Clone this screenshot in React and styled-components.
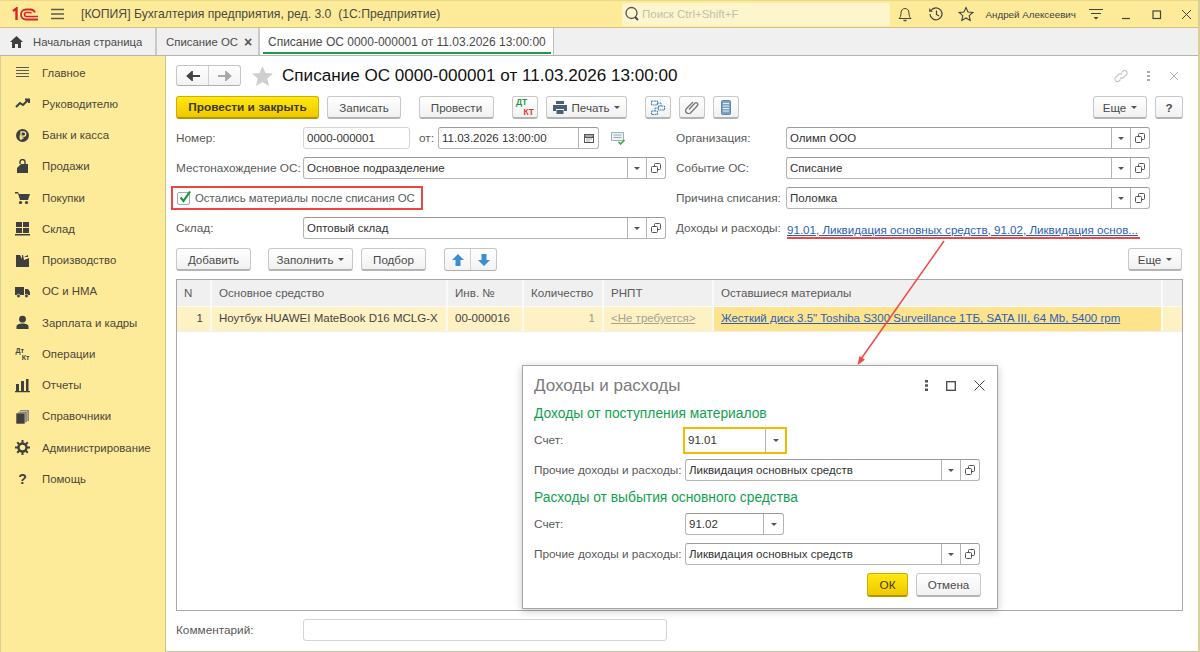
import React from 'react';
import styled, { createGlobalStyle } from 'styled-components';

const GlobalStyle = createGlobalStyle`
  html, body { margin: 0; padding: 0; }
  body {
    font-family: 'Liberation Sans', Arial, sans-serif;
    font-size: 12px;
    color: #4b4b4b;
    background: #fff;
  }
`;

const Ink = '#3f3f3f';

const Glyph = ({ w = 16, h = 16, vb, children, className }) => (
  <svg className={className} width={w} height={h} viewBox={vb || `0 0 ${w} ${h}`} fill="none">
    {children}
  </svg>
);

const CopyIcon = () => (
  <Glyph w={10} h={10}>
    <rect x="3.500" y="0.500" width="6" height="6" rx="1" stroke="#555" />
    <rect x="0.500" y="3.500" width="6" height="6" rx="1" stroke="#555" fill="#fff" />
  </Glyph>
);

const sideIcons = {
  main: (
    <path d="M1 2.500h13M1 5.500h13M1 8.500h13M1 11.500h13" stroke="#5a5a5a" strokeWidth="1.200" />
  ),
  chief: (
    <path d="M1 11l4-4 3 2 5-5M10 3.500h4v3.500" stroke={Ink} strokeWidth="2" />
  ),
  bank: (
    <>
      <circle cx="7.500" cy="7.500" r="6.500" fill={Ink} />
      <path d="M6 12V3.800h2.500a2 2 0 010 4.400H4.500M4.500 10h4" stroke="#fdeb99" strokeWidth="1.300" />
    </>
  ),
  sales: (
    <>
      <path d="M2 5h11v9H2z" fill={Ink} />
      <path d="M5 7V3a2.500 2.500 0 015 0v4" stroke={Ink} strokeWidth="1.400" />
      <path d="M2 9l4-4h-4z" fill="#fdeb99" />
    </>
  ),
  buy: (
    <>
      <path d="M0 2h3l1 2h11l-2 6H5L3 3.500H0z" fill={Ink} />
      <circle cx="5.500" cy="12.500" r="1.600" fill={Ink} />
      <circle cx="11.500" cy="12.500" r="1.600" fill={Ink} />
    </>
  ),
  store: (
    <path d="M1 1h6v5H1zM8 1h6v5H8zM1 7h6v5H1zM8 7h6v5H8zM0 13h15v1.400H0z" fill={Ink} />
  ),
  prod: (
    <path d="M1 14V2h4l2 4V2l1 0 1 5 5-2v9z M9 4l4-2v2z" fill={Ink} />
  ),
  assets: (
    <>
      <path d="M0 3h9v8H0zM10 5h3l2 3v3h-5z" fill={Ink} />
      <circle cx="3.500" cy="12" r="1.800" fill={Ink} stroke="#fdeb99" strokeWidth=".7" />
      <circle cx="11.500" cy="12" r="1.800" fill={Ink} stroke="#fdeb99" strokeWidth=".7" />
    </>
  ),
  staff: (
    <>
      <circle cx="7.500" cy="4.200" r="3.400" fill={Ink} />
      <path d="M1.500 14v-2.500c0-2 2.500-3 6-3s6 1 6 3V14z" fill={Ink} />
    </>
  ),
  reports: (
    <path d="M1 6h3v7H1zM6 3h3v10H6zM11 1h2.500v12H11zM0 13h15v1.200H0z" fill={Ink} />
  ),
  refs: (
    <>
      <path d="M5 1h9v11H5z" fill="#8a8a8a" />
      <path d="M3 2.500h9v11H3z" fill="#6a6a6a" stroke="#fdeb99" strokeWidth=".6" />
      <path d="M1 4h9v11H1z" fill={Ink} stroke="#fdeb99" strokeWidth=".6" />
    </>
  ),
  admin: (
    <>
      <circle cx="7.500" cy="7.500" r="4" stroke={Ink} strokeWidth="2.400" />
      <path
        d="M7.500 0v3M7.500 12v3M0 7.500h3M12 7.500h3M2.200 2.200l2 2M10.800 10.800l2 2M2.200 12.800l2-2M10.800 4.200l2-2"
        stroke={Ink}
        strokeWidth="2"
      />
    </>
  ),
};

const menu = [
  ['Главное', 'main'],
  ['Руководителю', 'chief'],
  ['Банк и касса', 'bank'],
  ['Продажи', 'sales'],
  ['Покупки', 'buy'],
  ['Склад', 'store'],
  ['Производство', 'prod'],
  ['ОС и НМА', 'assets'],
  ['Зарплата и кадры', 'staff'],
  ['Операции', 'ops'],
  ['Отчеты', 'reports'],
  ['Справочники', 'refs'],
  ['Администрирование', 'admin'],
  ['Помощь', 'help'],
];

const Page = styled.div`
  width: 1200px;
  height: 652px;
  position: relative;
  overflow: hidden;
  display: flex;
  flex-direction: column;
  box-sizing: border-box;
  border-right: 2px solid #d9cf9b;
`;

const TopBar = styled.header`
  height: 28px;
  flex: none;
  box-sizing: border-box;
  display: flex;
  align-items: center;
  background: #fdeb99;
  border-bottom: 1px solid #cfc384;
  border-top: 1px solid #e8d98a;
  padding-left: 12px;
`;

const Logo = styled.div`
  width: 27px;
  flex: none;
  display: flex;
`;

const Burger = styled.div`
  margin-left: 12px;
  flex: none;
  display: flex;
`;

const AppTitle = styled.div`
  margin-left: 17px;
  width: 541px;
  flex: none;
  font-size: 12.200px;
  white-space: pre;
  color: #4a4a42;
`;

const Search = styled.div`
  width: 268px;
  height: 23px;
  flex: none;
  box-sizing: border-box;
  border-radius: 2px;
  background: #fdf5cc;
  display: flex;
  align-items: center;
  gap: 2px;
  padding-left: 2px;
  color: #c3c0ae;
  font-size: 11.500px;
`;

const TopIcons = styled.div`
  display: flex;
  align-items: center;
  flex: 1;
  min-width: 0;
`;

const TopIcon = styled.span`
  display: flex;
  justify-content: center;
  flex: none;
  width: ${(p) => p.$w || 30.500}px;
`;

const UserName = styled.span`
  font-size: 9.800px;
  color: #3f3f3f;
  margin-left: 4px;
  width: 103px;
  flex: none;
  white-space: nowrap;
`;

const TabBar = styled.nav`
  height: 28px;
  flex: none;
  box-sizing: border-box;
  display: flex;
  background: #f0f0f0;
  border-bottom: 1px solid #b5b5b5;
`;

const Tab = styled.div`
  height: 27px;
  box-sizing: border-box;
  display: flex;
  align-items: center;
  flex: none;
  width: ${(p) => p.$w}px;
  padding-left: ${(p) => p.$pad}px;
  gap: ${(p) => p.$gap || 0}px;
  font-size: ${(p) => p.$size}px;
  white-space: nowrap;
  color: #4b4b4b;
  border-right: 2px solid #c9c9c9;
  position: relative;
  background: ${(p) => (p.$active ? '#fff' : '#f0f0f0')};
  ${(p) => p.$active && 'border-right: 1px solid #bdbdbd;'}
  ${(p) =>
    p.$active &&
    `&::after {
      content: '';
      position: absolute;
      left: 3px;
      right: 2px;
      bottom: 1px;
      height: 2px;
      background: #1f9a4d;
    }`}
`;

const TabClose = styled.span`
  font-size: 14px;
  font-weight: 700;
  color: #555;
  line-height: 1;
`;

const Body = styled.div`
  flex: 1;
  display: flex;
  min-height: 0;
`;

const Sidebar = styled.aside`
  width: 166px;
  flex: none;
  box-sizing: border-box;
  background: #fdeb99;
  border-left: 1px solid #d9cf9b;
  border-right: 1px solid #c9c08a;
  padding-top: 1px;
`;

const MenuItem = styled.div`
  height: 31.250px;
  display: flex;
  align-items: center;
  padding-left: 14px;
  gap: 12px;
  font-size: 11.400px;
  color: #4c463c;
  white-space: nowrap;
`;

const MenuIcon = styled.span`
  width: 15px;
  height: 15px;
  flex: none;
  display: flex;
  align-items: center;
  justify-content: center;
  color: ${Ink};
`;

const HelpMark = styled.span`
  font-size: 14px;
  font-weight: 700;
`;

const DtKt = styled.span`
  position: relative;
  display: block;
  width: ${(p) => p.$w}px;
  height: ${(p) => p.$w}px;
  font-size: ${(p) => p.$size}px;
  font-weight: 700;
  line-height: 1;
  color: ${(p) => p.$top};
  & > b:last-child {
    position: absolute;
    right: 0;
    bottom: 0;
    color: ${(p) => p.$bottom};
  }
  & > b:first-child {
    position: absolute;
    left: 0;
    top: 0;
  }
`;

const Main = styled.main`
  flex: 1;
  min-width: 0;
  box-sizing: border-box;
  padding: 9px 15px 0 10px;
  background: #fff;
  border-bottom: 1px solid #cfc384;
  display: flex;
  flex-direction: column;
`;

const TitleRow = styled.div`
  height: 21px;
  display: flex;
  align-items: center;
`;

const NavGroup = styled.div`
  width: ${(p) => p.$w || 65}px;
  height: ${(p) => p.$h || 21}px;
  margin-left: ${(p) => p.$ml || 0}px;
  box-sizing: border-box;
  flex: none;
  display: flex;
  border: 1px solid #c6c6c6;
  border-bottom-color: #b0b0b0;
  border-radius: 3px;
  background: linear-gradient(#fff, #f2f2f2);
`;

const NavCell = styled.span`
  flex: 1;
  display: flex;
  align-items: center;
  justify-content: center;
  & + & {
    border-left: 1px solid #d0d0d0;
  }
`;

const StarMark = styled.span`
  margin-left: 11px;
  display: flex;
`;

const FormTitle = styled.h1`
  margin: 0 0 0 9px;
  font-size: 17.100px;
  font-weight: 400;
  color: #111;
  white-space: nowrap;
  flex: 1;
  line-height: 21px;
`;

const TitleTools = styled.div`
  display: flex;
  align-items: center;
  gap: 19px;
  margin-right: 4px;
`;

const Toolbar = styled.div`
  margin-top: 10px;
  height: 23px;
  display: flex;
  flex: none;
`;

const Btn = styled.button`
  height: ${(p) => p.$h || 23}px;
  width: ${(p) => p.$w}px;
  flex: none;
  box-sizing: border-box;
  padding: 0;
  margin-left: ${(p) => p.$ml || 0}px;
  display: flex;
  align-items: center;
  justify-content: center;
  gap: 5px;
  font-family: inherit;
  font-size: 11.600px;
  color: #4b4b4b;
  background: linear-gradient(#ffffff, #f1f1f1);
  border: 1px solid #c8c8c8;
  border-bottom: 2px solid #b4b4b4;
  border-radius: 3px;
  white-space: nowrap;
`;

const PrimaryBtn = styled(Btn)`
  font-weight: ${(p) => (p.$bold ? 700 : 400)};
  font-size: 11.800px;
  color: #3d3a20;
  background: linear-gradient(#ffe810, #f0c800);
  border-color: #d0ad00;
  border-bottom-color: #b39600;
`;

const Caret = styled.span`
  width: 0;
  height: 0;
  border-left: 3px solid transparent;
  border-right: 3px solid transparent;
  border-top: 3px solid #555;
  flex: none;
`;

const FormGrid = styled.div`
  margin-top: 8px;
  display: grid;
  grid-template-columns: 500px 1fr;
`;

const FormCol = styled.div`
  display: flex;
  flex-direction: column;
  gap: 8px;
`;

const Row = styled.div`
  height: 22px;
  display: flex;
  align-items: center;
`;

const Label = styled.span`
  width: ${(p) => p.$w}px;
  flex: none;
  white-space: nowrap;
  font-size: 11.800px;
  color: #5a5a5a;
`;

const FieldBox = styled.div`
  width: ${(p) => p.$w}px;
  height: 22px;
  box-sizing: border-box;
  flex: none;
  display: flex;
  align-items: stretch;
  background: #fff;
  border: 1px solid ${(p) => (p.$soft ? '#d4d4d4' : '#b4b4b4')};
  border-top-color: ${(p) => (p.$soft ? '#d4d4d4' : '#9a9a9a')};
  border-radius: 3px;
`;

const FocusBox = styled(FieldBox)`
  height: 27px;
  margin-left: -2px;
  border: 2px solid #f6b900;
  border-radius: 0;
`;

const FieldText = styled.span`
  flex: 1;
  min-width: 0;
  padding-left: 3px;
  line-height: 20px;
  font-size: 11.500px;
  color: #333;
  white-space: nowrap;
  ${(p) => p.$tall && 'line-height: 23px;'}
`;

const FieldBtn = styled.span`
  width: ${(p) => p.$w || 18}px;
  flex: none;
  display: flex;
  align-items: center;
  justify-content: center;
  border-left: 1px solid #b4b4b4;
`;

const OffLabel = styled(Label)`
  margin-left: 9px;
  width: 19px;
`;

const NoteIcon = styled.span`
  margin-left: 12px;
  display: flex;
`;

const CheckRow = styled.div`
  height: 24px;
  width: 252px;
  margin-left: -5px;
  box-sizing: border-box;
  flex: none;
  display: flex;
  align-items: center;
  gap: 5px;
  padding-left: 4px;
  white-space: nowrap;
  font-size: 11.400px;
  color: #5a5a5a;
  border: 2px solid #ef4444;
`;

const CheckBox = styled.span`
  width: 13px;
  height: 13px;
  box-sizing: border-box;
  flex: none;
  border: 1px solid #a8a8a8;
  border-radius: 2px;
  position: relative;
  & > svg {
    position: absolute;
    left: 0;
    top: -3px;
  }
`;

const FieldLink = styled.a`
  display: block;
  margin-left: 1px;
  width: 353px;
  line-height: 15px;
  margin-top: 4px;
  font-size: 11.600px;
  color: #2f5fb5;
  white-space: nowrap;
  text-decoration: underline;
  border-bottom: 2px solid #ef4444;
`;

const TableBar = styled(Toolbar)`
  margin-top: 9px;
`;

const Table = styled.div`
  margin-top: 8px;
  width: 1007px;
  height: 332px;
  flex: none;
  box-sizing: border-box;
  border: 1px solid #a9a9a9;
`;

const gridCols = '35px 236px 76px 80px 110px 449px 1fr';

const HeadRow = styled.div`
  display: grid;
  grid-template-columns: ${gridCols};
  height: 27px;
  background: #f0f0f0;
  box-sizing: border-box;
  border-bottom: 1px solid #fbfbfb;
`;

const HeadCell = styled.div`
  padding-left: 7px;
  line-height: 26px;
  font-size: 11.600px;
  color: #5a5a5a;
  white-space: nowrap;
  border-right: 2px solid #fafafa;
  &:last-child {
    border-right: 0;
  }
`;

const DataRow = styled.div`
  display: grid;
  grid-template-columns: ${gridCols};
  height: 25px;
  box-sizing: border-box;
  border-bottom: 1px solid #eeeeee;
`;

const DataCell = styled.div`
  padding: 0 7px;
  line-height: 23px;
  font-size: 11.500px;
  color: ${(p) => p.$color || '#454545'};
  white-space: nowrap;
  overflow: hidden;
  text-align: ${(p) => p.$align || 'left'};
  background: ${(p) => (p.$current ? '#fde38c' : '#fef1c4')};
  border-right: 2px solid #fffaf0;
  &:last-child {
    border-right: 0;
  }
`;

const CellLink = styled.a`
  color: ${(p) => p.$color || '#2f5fb5'};
  text-decoration: underline;
`;

const CommentRow = styled(Row)`
  margin-top: 8px;
`;

const Dialog = styled.section`
  position: absolute;
  left: 522px;
  top: 365px;
  width: 476px;
  height: 244px;
  box-sizing: border-box;
  background: #fff;
  border: 1px solid #a5a5a5;
  box-shadow: 0 2px 8px rgba(0, 0, 0, 0.22);
  padding: 0 16px 0 11px;
  display: flex;
  flex-direction: column;
`;

const DialogHead = styled.div`
  height: 39px;
  flex: none;
  display: flex;
  align-items: center;
`;

const DialogTitle = styled.h2`
  margin: 0;
  flex: 1;
  font-size: 17px;
  font-weight: 400;
  color: #7b7b7b;
`;

const DialogTools = styled.div`
  display: flex;
  align-items: center;
  gap: 18px;
  margin-right: -4px;
`;

const Section = styled.h3`
  margin: 0;
  height: 18px;
  line-height: 18px;
  font-size: 13.800px;
  font-weight: 400;
  color: #12a150;
  white-space: nowrap;
`;

const DialogRow = styled(Row)`
  margin-top: ${(p) => p.$mt}px;
`;

const DialogFoot = styled.div`
  margin-top: 8px;
  display: flex;
  justify-content: flex-end;
  gap: 8px;
`;

const ArrowLayer = styled.svg`
  position: absolute;
  left: 0;
  top: 0;
  pointer-events: none;
`;

const RefField = ({ w, text }) => (
  <FieldBox $w={w}>
    <FieldText>{text}</FieldText>
    <FieldBtn><Caret /></FieldBtn>
    <FieldBtn><CopyIcon /></FieldBtn>
  </FieldBox>
);

const ChoiceField = ({ w, text }) => (
  <FieldBox $w={w}>
    <FieldText>{text}</FieldText>
    <FieldBtn $w={19}><Caret /></FieldBtn>
  </FieldBox>
);

export default function App() {
  return (
    <>
      <GlobalStyle />
      <Page>
        <TopBar>
          <Logo>
            <Glyph w={27} h={15}>
              <path d="M1 4l3.500-2.500V13" stroke="#d8232a" strokeWidth="2.400" />
              <path d="M26 12.500H14a5 5 0 110-10h4.500a5 5 0 014.500 3" stroke="#d8232a" strokeWidth="1.800" />
              <path d="M26 9.500H14.500a2 2 0 110-4H18a2 2 0 011.500 1" stroke="#d8232a" strokeWidth="1.500" />
            </Glyph>
          </Logo>
          <Burger>
            <Glyph w={13} h={12}>
              <path d="M0 1.500h13M0 6h13M0 10.500h13" stroke="#5b5b50" strokeWidth="1.300" />
            </Glyph>
          </Burger>
          <AppTitle>[КОПИЯ] Бухгалтерия предприятия, ред. 3.0  (1С:Предприятие)</AppTitle>
          <Search>
            <Glyph w={16} h={16}>
              <circle cx="7.500" cy="7" r="5.500" stroke="#555" strokeWidth="1.300" />
              <path d="M11 11l3 3" stroke="#444" strokeWidth="1.800" />
            </Glyph>
            Поиск Ctrl+Shift+F
          </Search>
          <TopIcons>
            <TopIcon>
              <Glyph w={14} h={16}>
                <path d="M1 12.500h12c-1.500-1.500-2-2.500-2-5.500 0-3-2-4.500-4-4.500S3 4 3 7c0 3-.5 4-2 5.500z" stroke="#444" />
                <path d="M5.500 14.500h3" stroke="#444" strokeWidth="1.400" />
              </Glyph>
            </TopIcon>
            <TopIcon>
              <Glyph w={16} h={16}>
                <path d="M3 4.500A6 6 0 112 8" stroke="#444" strokeWidth="1.200" />
                <path d="M1.500 2.500v3h3" fill="#444" stroke="#444" strokeWidth=".6" />
                <path d="M8.500 4.500V8.500l2.500 1.500" stroke="#444" strokeWidth="1.200" />
              </Glyph>
            </TopIcon>
            <TopIcon>
              <Glyph w={16} h={16}>
                <path d="M8 1.500l2 4.500 4.800.5-3.600 3.200 1 4.800L8 12l-4.200 2.500 1-4.800L1.200 6.500 6 6z" stroke="#444" strokeWidth="1.100" />
              </Glyph>
            </TopIcon>
            <UserName>Андрей Алексеевич</UserName>
            <TopIcon $w={14}>
              <Glyph w={14} h={14}>
                <path d="M0 2.500h14M2 6.500h10" stroke="#444" strokeWidth="1.200" />
                <path d="M4.500 10h5L7 12.500z" fill="#444" />
              </Glyph>
            </TopIcon>
            <TopIcon $w={46}>
              <Glyph w={8} h={12}>
                <path d="M0 10.500h8" stroke="#444" strokeWidth="1.200" />
              </Glyph>
            </TopIcon>
            <TopIcon $w={16}>
              <Glyph w={11} h={11}>
                <rect x="2" y="2" width="7.500" height="7.500" stroke="#444" strokeWidth="1.200" />
              </Glyph>
            </TopIcon>
            <TopIcon $w={44}>
              <Glyph w={11} h={11}>
                <path d="M1 1l9 9M10 1l-9 9" stroke="#444" />
              </Glyph>
            </TopIcon>
          </TopIcons>
        </TopBar>

        <TabBar>
          <Tab $w={157} $pad={10} $gap={10} $size={11.300}>
            <Glyph w={13} h={12}>
              <path d="M6.500 0L13 6h-2v6H8V8H5v4H2V6H0z" fill="#3f3f3f" />
            </Glyph>
            Начальная страница
          </Tab>
          <Tab $w={103} $pad={9} $gap={6} $size={11.400}>
            Списание ОС <TabClose>×</TabClose>
          </Tab>
          <Tab $w={294} $pad={8} $size={12} $active>
            Списание ОС 0000-000001 от 11.03.2026 13:00:00
          </Tab>
        </TabBar>

        <Body>
          <Sidebar>
            {menu.map(([label, icon]) => (
              <MenuItem key={label}>
                <MenuIcon>
                  {icon === 'ops' ? (
                    <DtKt $w={14} $size={7} $top="#444" $bottom="#444">
                      <b>Дт</b>
                      <b>Кт</b>
                    </DtKt>
                  ) : icon === 'help' ? (
                    <HelpMark>?</HelpMark>
                  ) : (
                    <Glyph w={15} h={15}>{sideIcons[icon]}</Glyph>
                  )}
                </MenuIcon>
                {label}
              </MenuItem>
            ))}
          </Sidebar>

          <Main>
            <TitleRow>
              <NavGroup>
                <NavCell>
                  <Glyph w={14} h={10}>
                    <path d="M14 5H4M6 1L1.500 5 6 9z" stroke="#444" strokeWidth="1.800" fill="#444" />
                  </Glyph>
                </NavCell>
                <NavCell>
                  <Glyph w={14} h={10}>
                    <path d="M0 5h10M8 1l4.500 4L8 9z" stroke="#a8a8a8" strokeWidth="1.800" fill="#a8a8a8" />
                  </Glyph>
                </NavCell>
              </NavGroup>
              <StarMark>
                <Glyph w={21} h={20}>
                  <path d="M10.500 0l3 7 7.500.6-5.700 4.900 1.800 7.500-6.600-4-6.600 4 1.800-7.500L0 7.600 7.500 7z" fill="#cfcfcf" />
                </Glyph>
              </StarMark>
              <FormTitle>Списание ОС 0000-000001 от 11.03.2026 13:00:00</FormTitle>
              <TitleTools>
                <Glyph w={14} h={14}>
                  <path d="M6 8.500a2.500 2.500 0 003.500 0l3-3a2.500 2.500 0 00-3.500-3.500L7.500 3.500M8 5.500a2.500 2.500 0 00-3.500 0l-3 3A2.500 2.500 0 005 12l1.500-1.500" stroke="#c4c4c4" strokeWidth="1.100" />
                </Glyph>
                <Glyph w={3} h={12}>
                  <path d="M0 1h3v2H0zM0 5h3v2H0zM0 9h3v2H0z" fill="#a9a9a9" />
                </Glyph>
                <Glyph w={10} h={10}>
                  <path d="M1 1l8 8M9 1L1 9" stroke="#b5b5b5" />
                </Glyph>
              </TitleTools>
            </TitleRow>

            <Toolbar>
              <PrimaryBtn $w={143} $bold>Провести и закрыть</PrimaryBtn>
              <Btn $w={74} $ml={8}>Записать</Btn>
              <Btn $w={75} $ml={18}>Провести</Btn>
              <Btn $w={26} $ml={18}>
                <DtKt $w={18} $size={8.500} $top="#1d9a46" $bottom="#e2382f">
                  <b>ДТ</b>
                  <b>КТ</b>
                </DtKt>
              </Btn>
              <Btn $w={81} $ml={8}>
                <Glyph w={14} h={13}>
                  <path d="M3 0h8v3H3zM0 4h14v6h-3V8H3v2H0zM3.500 9h7v4h-7z" fill="#4a6078" />
                </Glyph>
                Печать <Caret />
              </Btn>
              <Btn $w={26} $ml={18}>
                <Glyph w={14} h={15}>
                  <path d="M.5 1h6v4h-6zM7.500 6h6v4h-6zM.5 11h6v3.500h-6zM6.500 3h3.500v3M7.500 8H4v3" stroke="#3d80b8" strokeDasharray="2 .6" />
                </Glyph>
              </Btn>
              <Btn $w={26} $ml={8}>
                <Glyph w={14} h={14}>
                  <path d="M4 9.500l6-6.500a1.800 1.800 0 012.500 2.500l-7 7.500a3 3 0 01-4.200-4.200L8 2" stroke="#777" strokeWidth="1.300" />
                </Glyph>
              </Btn>
              <Btn $w={26} $ml={8}>
                <Glyph w={10} h={15}>
                  <rect x=".5" y=".5" width="9" height="14" rx="1" fill="#7da3c4" stroke="#5d87ac" />
                  <path d="M2 3.500h6M2 6h6M2 8.500h6M2 11h6" stroke="#e4eef6" />
                </Glyph>
              </Btn>
              <Btn $w={54} $ml={354}>Еще <Caret /></Btn>
              <Btn $w={28} $ml={8}><b>?</b></Btn>
            </Toolbar>

            <FormGrid>
              <FormCol>
                <Row>
                  <Label $w={127}>Номер:</Label>
                  <FieldBox $w={107} $soft>
                    <FieldText>0000-000001</FieldText>
                  </FieldBox>
                  <OffLabel>от:</OffLabel>
                  <FieldBox $w={161}>
                    <FieldText>11.03.2026 13:00:00</FieldText>
                    <FieldBtn $w={19}>
                      <Glyph w={10} h={10}>
                        <rect x=".5" y="1.500" width="9" height="8" stroke="#555" />
                        <path d="M1 3h8v1.500H1zM2.500 6h1M4.500 6h1M6.500 6h1M2.500 8h1M4.500 8h1" stroke="#555" />
                      </Glyph>
                    </FieldBtn>
                  </FieldBox>
                  <NoteIcon>
                    <Glyph w={15} h={13}>
                      <path d="M.5.500h12v8h-12z" fill="#eef1f4" stroke="#9fb0bd" />
                      <path d="M2.500 3h8M2.500 5.500h8" stroke="#9fb0bd" />
                      <path d="M7.500 10l2 2 4-4" stroke="#39a845" strokeWidth="1.600" />
                    </Glyph>
                  </NoteIcon>
                </Row>
                <Row>
                  <Label $w={127}>Местонахождение ОС:</Label>
                  <RefField w={363} text="Основное подразделение" />
                </Row>
                <Row>
                  <CheckRow>
                    <CheckBox>
                      <Glyph w={14} h={14}>
                        <path d="M2.500 7.500l3 3.500 6.500-9.500" stroke="#15973f" strokeWidth="2.200" />
                      </Glyph>
                    </CheckBox>
                    Остались материалы после списания ОС
                  </CheckRow>
                </Row>
                <Row>
                  <Label $w={127}>Склад:</Label>
                  <RefField w={363} text="Оптовый склад" />
                </Row>
              </FormCol>
              <FormCol>
                <Row>
                  <Label $w={110}>Организация:</Label>
                  <RefField w={364} text="Олимп ООО" />
                </Row>
                <Row>
                  <Label $w={110}>Событие ОС:</Label>
                  <RefField w={364} text="Списание" />
                </Row>
                <Row>
                  <Label $w={110}>Причина списания:</Label>
                  <RefField w={364} text="Поломка" />
                </Row>
                <Row>
                  <Label $w={110}>Доходы и расходы:</Label>
                  <FieldLink>91.01, Ликвидация основных средств, 91.02, Ликвидация основ...</FieldLink>
                </Row>
              </FormCol>
            </FormGrid>

            <TableBar>
              <Btn $w={75}>Добавить</Btn>
              <Btn $w={85} $ml={17}>Заполнить <Caret /></Btn>
              <Btn $w={65} $ml={8}>Подбор</Btn>
              <NavGroup $w={53} $h={23} $ml={18}>
                <NavCell>
                  <Glyph w={12} h={12}>
                    <path d="M6 0l6 6H8.500v6h-5V6H0z" fill="#3d8fd0" />
                  </Glyph>
                </NavCell>
                <NavCell>
                  <Glyph w={12} h={12}>
                    <path d="M6 12l6-6H8.500V0h-5v6H0z" fill="#3d8fd0" />
                  </Glyph>
                </NavCell>
              </NavGroup>
              <Btn $w={54} $ml={631}>Еще <Caret /></Btn>
            </TableBar>

            <Table>
              <HeadRow>
                <HeadCell>N</HeadCell>
                <HeadCell>Основное средство</HeadCell>
                <HeadCell>Инв. №</HeadCell>
                <HeadCell>Количество</HeadCell>
                <HeadCell>РНПТ</HeadCell>
                <HeadCell>Оставшиеся материалы</HeadCell>
                <HeadCell />
              </HeadRow>
              <DataRow>
                <DataCell $align="right">1</DataCell>
                <DataCell>Ноутбук HUAWEI MateBook D16 MCLG-X</DataCell>
                <DataCell>00-000016</DataCell>
                <DataCell $align="right" $color="#9a9a8a">1</DataCell>
                <DataCell><CellLink $color="#a5a291">&lt;Не требуется&gt;</CellLink></DataCell>
                <DataCell $current>
                  <CellLink>Жесткий диск 3.5" Toshiba S300 Surveillance 1ТБ, SATA III, 64 Mb, 5400 rpm</CellLink>
                </DataCell>
                <DataCell />
              </DataRow>
            </Table>

            <CommentRow>
              <Label $w={127}>Комментарий:</Label>
              <FieldBox $w={364} $soft />
            </CommentRow>
          </Main>
        </Body>

        <ArrowLayer width="1200" height="652" viewBox="0 0 1200 652">
          <path d="M944 241L861 359" stroke="#f04a4a" strokeWidth="1.500" />
          <path d="M857.500 365l2-9 5.500 3.800z" fill="#f04a4a" />
        </ArrowLayer>

        <Dialog>
          <DialogHead>
            <DialogTitle>Доходы и расходы</DialogTitle>
            <DialogTools>
              <Glyph w={3} h={11}>
                <path d="M0 0h3v2.500H0zM0 4.200h3v2.500H0zM0 8.500h3V11H0z" fill="#555" />
              </Glyph>
              <Glyph w={10} h={10}>
                <rect x=".7" y=".7" width="8.600" height="8.600" stroke="#444" strokeWidth="1.300" />
              </Glyph>
              <Glyph w={11} h={11}>
                <path d="M.5.500l10 10M10.500.5l-10 10" stroke="#444" />
              </Glyph>
            </DialogTools>
          </DialogHead>
          <Section>Доходы от поступления материалов</Section>
          <DialogRow $mt={6}>
            <Label $w={151}>Счет:</Label>
            <FocusBox $w={104}>
              <FieldText $tall>91.01</FieldText>
              <FieldBtn $w={19}><Caret /></FieldBtn>
            </FocusBox>
          </DialogRow>
          <DialogRow $mt={8}>
            <Label $w={151}>Прочие доходы и расходы:</Label>
            <RefField w={295} text="Ликвидация основных средств" />
          </DialogRow>
          <DialogRow $mt={6}>
            <Section>Расходы от выбытия основного средства</Section>
          </DialogRow>
          <DialogRow $mt={4}>
            <Label $w={151}>Счет:</Label>
            <ChoiceField w={99} text="91.02" />
          </DialogRow>
          <DialogRow $mt={8}>
            <Label $w={151}>Прочие доходы и расходы:</Label>
            <RefField w={295} text="Ликвидация основных средств" />
          </DialogRow>
          <DialogFoot>
            <PrimaryBtn $w={41} $h={24}>ОК</PrimaryBtn>
            <Btn $w={65} $h={24}>Отмена</Btn>
          </DialogFoot>
        </Dialog>
      </Page>
    </>
  );
}
